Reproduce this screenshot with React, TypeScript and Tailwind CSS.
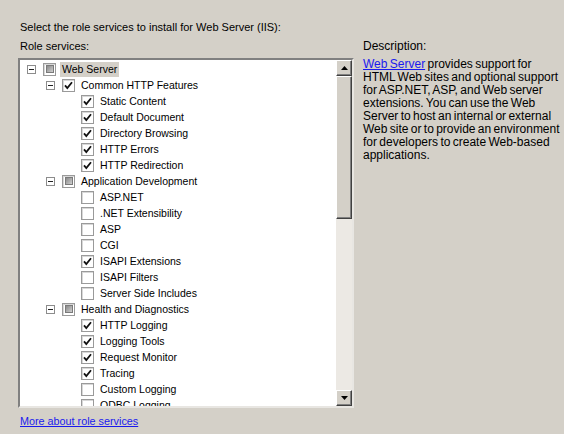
import React from "react";

type Node = {
  label: string;
  level: 0 | 1 | 2;
  state: "checked" | "empty" | "mixed";
  selected?: boolean;
};

const nodes: Node[] = [
  { label: "Web Server", level: 0, state: "mixed", selected: true },
  { label: "Common HTTP Features", level: 1, state: "checked" },
  { label: "Static Content", level: 2, state: "checked" },
  { label: "Default Document", level: 2, state: "checked" },
  { label: "Directory Browsing", level: 2, state: "checked" },
  { label: "HTTP Errors", level: 2, state: "checked" },
  { label: "HTTP Redirection", level: 2, state: "checked" },
  { label: "Application Development", level: 1, state: "mixed" },
  { label: "ASP.NET", level: 2, state: "empty" },
  { label: ".NET Extensibility", level: 2, state: "empty" },
  { label: "ASP", level: 2, state: "empty" },
  { label: "CGI", level: 2, state: "empty" },
  { label: "ISAPI Extensions", level: 2, state: "checked" },
  { label: "ISAPI Filters", level: 2, state: "empty" },
  { label: "Server Side Includes", level: 2, state: "empty" },
  { label: "Health and Diagnostics", level: 1, state: "mixed" },
  { label: "HTTP Logging", level: 2, state: "checked" },
  { label: "Logging Tools", level: 2, state: "checked" },
  { label: "Request Monitor", level: 2, state: "checked" },
  { label: "Tracing", level: 2, state: "checked" },
  { label: "Custom Logging", level: 2, state: "empty" },
  { label: "ODBC Logging", level: 2, state: "empty" },
];

const indent = ["pl-[7px]", "pl-[26px]", "pl-[45px]"];

function Expander() {
  return (
    <span className="w-[9px] h-[9px] border border-[#8c8c8c] bg-white flex items-center justify-center mr-[7px]">
      <span className="w-[5px] h-px bg-[#222]" />
    </span>
  );
}

function Checkbox({ state }: { state: Node["state"] }) {
  return (
    <span className="w-[13px] h-[13px] border border-[#9a9a9a] bg-white flex items-center justify-center shadow-[inset_1px_1px_0_#d8d8d8]">
      {state === "checked" && (
        <svg width="9" height="9" viewBox="0 0 9 9">
          <path d="M1 4.3 L3.3 7 L8 1.2" fill="none" stroke="#111" strokeWidth="1.8" />
        </svg>
      )}
      {state === "mixed" && (
        <span className="w-[8px] h-[8px] bg-gradient-to-br from-[#8a8a8a] to-[#cfcfcf] border border-[#7a7a7a]" />
      )}
    </span>
  );
}

function ScrollButton({ dir }: { dir: "up" | "down" }) {
  return (
    <div className="w-[16px] h-[16px] bg-[#d4d0c8] border border-t-white border-l-white border-r-[#404040] border-b-[#404040] shadow-[inset_-1px_-1px_0_#808080] flex items-center justify-center">
      <svg width="7" height="4" viewBox="0 0 7 4">
        {dir === "up" ? <path d="M3.5 0 L7 4 L0 4 Z" fill="#000" /> : <path d="M0 0 L7 0 L3.5 4 Z" fill="#000" />}
      </svg>
    </div>
  );
}

export default function App() {
  return (
    <div
      className="w-[564px] h-[434px] bg-[#d4d0c8] text-black text-[11px] leading-[13px] pl-[18px] pt-[21px] overflow-hidden"
      style={{ fontFamily: '"Liberation Sans", Arial, sans-serif' }}
    >
      <div className="pl-[2px] h-[13px]">Select the role services to install for Web Server (IIS):</div>
      <div className="flex mt-[6px]">
        {/* tree of role services */}
        <div className="w-[336px] shrink-0">
          <div className="pl-[2px] h-[13px]">Role services:</div>
          <div className="mt-[5px] h-[350px] bg-white border-2 border-t-[#808080] border-l-[#808080] border-r-[#e8e6e2] border-b-[#e8e6e2] flex overflow-hidden">
            <div className="flex-1 overflow-hidden pt-px text-[10.5px]">
              {nodes.map((n) => (
                <div key={n.label} className={`h-[16px] flex items-center ${indent[n.level]}`}>
                  {n.level < 2 ? <Expander /> : <span className="w-[16px]" />}
                  <Checkbox state={n.state} />
                  <span
                    className={`ml-[4px] px-[2px] leading-[15px] whitespace-nowrap ${n.selected ? "bg-[#d4d0c8]" : ""}`}
                  >
                    {n.label}
                  </span>
                </div>
              ))}
            </div>
            <div className="w-[16px] flex flex-col bg-[#ece9e4]">
              <ScrollButton dir="up" />
              <div className="h-[143px] bg-[#d4d0c8] border border-t-white border-l-white border-r-[#404040] border-b-[#404040] shadow-[inset_-1px_-1px_0_#808080]" />
              <div className="flex-1" />
              <ScrollButton dir="down" />
            </div>
          </div>
          <div className="pl-[2px] mt-[7px] text-[10.8px]">
            <a className="text-[#1a1aee] underline">More about role services</a>
          </div>
        </div>
        {/* description */}
        <div className="ml-[9px] text-[12px]">
          <div className="h-[13px]">Description:</div>
          <p className="mt-[5px] whitespace-nowrap [word-spacing:-1px]">
            <a className="text-[#1a1aee] underline">Web Server</a> provides support for
            <br />
            HTML Web sites and optional support
            <br />
            for ASP.NET, ASP, and Web server
            <br />
            extensions. You can use the Web
            <br />
            Server to host an internal or external
            <br />
            Web site or to provide an environment
            <br />
            for developers to create Web-based
            <br />
            applications.
          </p>
        </div>
      </div>
    </div>
  );
}
